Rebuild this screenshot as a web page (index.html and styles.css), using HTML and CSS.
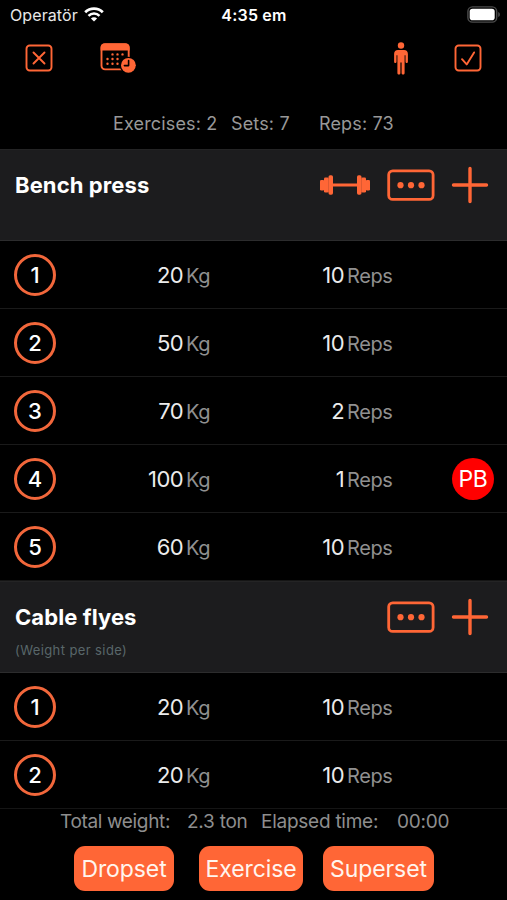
FILE: index.html
```html
<!DOCTYPE html>
<html lang="en">
<head>
    <meta charset="UTF-8">
    <meta name="viewport" content="width=device-width, initial-scale=1.0">
    <title>Workout</title>
    <link rel="stylesheet" href="styles.css">
</head>
<body>
    <div class="status-bar">
        <div class="carrier">
            <span>Operatör</span>
            <svg class="wifi" width="20" height="15" viewBox="0 0 20 15">
                <path d="M1.2 5.3a12.6 12.6 0 0 1 17.6 0" fill="none" stroke="#fff" stroke-width="2.8"/>
                <path d="M4.5 8.8a7.8 7.8 0 0 1 11 0" fill="none" stroke="#fff" stroke-width="2.5"/>
                <path d="M10 14.6l-3.1-3.1a4.4 4.4 0 0 1 6.2 0z" fill="#fff"/>
            </svg>
        </div>
        <span class="clock">4:35 em</span>
        <svg class="battery" width="34" height="17" viewBox="0 0 34 17">
            <rect x="0.9" y="0.9" width="28.8" height="15.2" rx="4.6" fill="none" stroke="#4b4b4b" stroke-width="1.4"/>
            <rect x="2.7" y="2.8" width="25" height="11.4" rx="2.8" fill="#fff"/>
            <path d="M31.2 6v5c1.3-.4 1.7-1.4 1.7-2.5s-.4-2.1-1.7-2.5z" fill="#4b4b4b"/>
        </svg>
    </div>

    <div class="toolbar">
        <button class="icon-btn close-btn" aria-label="Close">
            <svg width="28" height="28" viewBox="0 0 28 28">
                <rect x="1.5" y="1.5" width="25" height="25" rx="3.2"/>
                <path d="M8.5 8.5l11 11M19.5 8.5l-11 11"/>
            </svg>
        </button>
        <button class="icon-btn history-btn" aria-label="History">
            <svg width="36" height="31" viewBox="0 0 36 31">
                <rect x="1.5" y="1.2" width="27.2" height="25.2" rx="3.6"/>
                <path class="solid" d="M.6 7.5v-3a4 4 0 0 1 4-4h21a4 4 0 0 1 4 4v3z"/>
                <path class="dots" d="M12.5 11.4h.01M17.5 11.4h.01M22.5 11.4h.01M7.5 16h.01M12.5 16h.01M17.5 16h.01M7.5 20.8h.01M12.5 20.8h.01M17.5 20.8h.01"/>
                <circle class="gap" cx="28.4" cy="22.3" r="8.6"/>
                <circle class="solid" cx="28.4" cy="22.3" r="7.4"/>
                <path class="hands" d="M28.6 17.6v5h-4.2"/>
            </svg>
        </button>
        <button class="icon-btn body-btn" aria-label="Body">
            <svg width="14" height="33" viewBox="0 0 14 33">
                <circle class="solid" cx="7" cy="3.5" r="3.2"/>
                <path class="solid" d="M4 8h6c2.4 0 3.9 1.6 3.9 4v7.7c0 1.7-2.4 1.7-2.4 0v-6.500h-.9v17.700c0 2-3 2-3 0V20.500H6.400v10.400c0 2-3 2-3 0V13.200h-.9v6.500c0 1.700-2.400 1.700-2.400 0V12c0-2.400 1.500-4 3.900-4z"/>
            </svg>
        </button>
        <button class="icon-btn done-btn" aria-label="Done">
            <svg width="28" height="28" viewBox="0 0 28 28">
                <rect x="1.5" y="1.5" width="25" height="25" rx="3.2"/>
                <path d="M8 15.2l4.7 5.2 7.4-12"/>
            </svg>
        </button>
    </div>

    <div class="summary">
        <span class="exercises-count">Exercises: 2</span>
        <span class="sets-count">Sets: 7</span>
        <span class="reps-count">Reps: 73</span>
    </div>

    <div class="exercise">
        <div class="exercise-header">
            <div class="exercise-name">
                <h2>Bench press</h2>
            </div>
            <div class="actions">
                <svg class="barbell" width="50" height="20" viewBox="0 0 50 20">
                    <rect x="0" y="5" width="4.2" height="10.5" rx="1.3"/>
                    <rect x="4" y="2.6" width="4.7" height="15" rx="1.3"/>
                    <rect x="8.5" y="0.3" width="4.5" height="19.4" rx="1.6"/>
                    <rect x="12" y="8.5" width="26" height="3"/>
                    <rect x="37" y="0.3" width="4.5" height="19.4" rx="1.6"/>
                    <rect x="41.3" y="2.6" width="4.7" height="15" rx="1.3"/>
                    <rect x="45.8" y="5" width="4.2" height="10.5" rx="1.3"/>
                </svg>
                <svg class="more" width="48" height="32" viewBox="0 0 48 32">
                    <rect x="1.7" y="1.8" width="44.4" height="28.6" rx="4"/>
                    <circle cx="13.5" cy="16.2" r="3.1"/>
                    <circle cx="24" cy="16.2" r="3.1"/>
                    <circle cx="34.5" cy="16.2" r="3.1"/>
                </svg>
                <svg class="add" width="38" height="38" viewBox="0 0 38 38">
                    <path d="M19 2.5v33M2.5 19h33"/>
                </svg>
            </div>
        </div>
        <div class="set">
            <span class="set-number">1</span>
            <span class="value">20</span><span class="unit">Kg</span>
            <span class="value">10</span><span class="unit">Reps</span>
        </div>
        <div class="set">
            <span class="set-number">2</span>
            <span class="value">50</span><span class="unit">Kg</span>
            <span class="value">10</span><span class="unit">Reps</span>
        </div>
        <div class="set">
            <span class="set-number">3</span>
            <span class="value">70</span><span class="unit">Kg</span>
            <span class="value">2</span><span class="unit">Reps</span>
        </div>
        <div class="set">
            <span class="set-number">4</span>
            <span class="value">100</span><span class="unit">Kg</span>
            <span class="value">1</span><span class="unit">Reps</span>
            <span class="pb">PB</span>
        </div>
        <div class="set">
            <span class="set-number">5</span>
            <span class="value">60</span><span class="unit">Kg</span>
            <span class="value">10</span><span class="unit">Reps</span>
        </div>
    </div>

    <div class="exercise">
        <div class="exercise-header">
            <div class="exercise-name">
                <h2>Cable flyes</h2>
                <p>(Weight per side)</p>
            </div>
            <div class="actions">
                <svg class="more" width="48" height="32" viewBox="0 0 48 32">
                    <rect x="1.7" y="1.8" width="44.4" height="28.6" rx="4"/>
                    <circle cx="13.5" cy="16.2" r="3.1"/>
                    <circle cx="24" cy="16.2" r="3.1"/>
                    <circle cx="34.5" cy="16.2" r="3.1"/>
                </svg>
                <svg class="add" width="38" height="38" viewBox="0 0 38 38">
                    <path d="M19 2.5v33M2.5 19h33"/>
                </svg>
            </div>
        </div>
        <div class="set">
            <span class="set-number">1</span>
            <span class="value">20</span><span class="unit">Kg</span>
            <span class="value">10</span><span class="unit">Reps</span>
        </div>
        <div class="set">
            <span class="set-number">2</span>
            <span class="value">20</span><span class="unit">Kg</span>
            <span class="value">10</span><span class="unit">Reps</span>
        </div>
    </div>

    <div class="totals">
        <span class="weight-label">Total weight:</span>
        <span class="weight">2.3 ton</span>
        <span class="time-label">Elapsed time:</span>
        <span class="time">00:00</span>
    </div>

    <div class="buttons">
        <button class="dropset">Dropset</button>
        <button class="add-exercise">Exercise</button>
        <button class="superset">Superset</button>
    </div>
</body>
</html>
```
FILE: styles.css
```css
* {
    box-sizing: border-box;
}

body {
    margin: 0;
    width: 507px;
    height: 900px;
    overflow: hidden;
    background-color: #000;
    color: #fff;
    font-family: Inter, "Liberation Sans", sans-serif;
    white-space: nowrap;
}

button {
    border: none;
    padding: 0;
    font-family: inherit;
    cursor: pointer;
}

svg {
    display: block;
}

/* Status bar */
.status-bar {
    display: grid;
    grid-template-columns: 1fr auto 1fr;
    align-items: center;
    height: 30px;
    padding: 0 6px 1px 10px;
    font-size: 16px;
}

.carrier {
    display: flex;
    align-items: center;
    gap: 6px;
    letter-spacing: 0.1px;
    color: #e8e8e8;
}

.clock {
    padding-right: 3px;
    font-weight: 600;
    letter-spacing: 0.2px;
}

.battery {
    justify-self: end;
}

/* Toolbar */
.toolbar {
    display: flex;
    height: 67px;
    padding: 12px 25px 0 25px;
}

.icon-btn {
    display: block;
    height: 32px;
    background: none;
}

.icon-btn svg {
    fill: none;
    stroke: #ff6636;
    stroke-width: 1.9;
    stroke-linecap: round;
    stroke-linejoin: round;
}

.icon-btn .solid {
    fill: #ff6636;
    stroke: none;
}

.icon-btn .dots {
    stroke-width: 2.4;
}

.icon-btn .gap {
    fill: #000;
    stroke: none;
}

.icon-btn .hands {
    stroke: #000;
    stroke-width: 1.6;
}

.history-btn {
    margin-left: 47px;
}

.body-btn {
    margin-left: auto;
}

.done-btn {
    margin-left: 46px;
}

/* Summary */
.summary {
    display: flex;
    height: 52px;
    padding-left: 113px;
    line-height: 54px;
    font-size: 18px;
    letter-spacing: 0.15px;
    color: #989898;
}

.exercises-count {
    width: 118px;
}

.sets-count {
    width: 88px;
}

/* Exercises */
.exercise-header {
    display: flex;
    justify-content: space-between;
    height: 92px;
    padding: 17px 18px 0 15px;
    background-color: #1c1c1e;
    border-top: 1px solid #242425;
    border-bottom: 1px solid #2c2c2d;
}

.exercise-name h2 {
    margin: 0;
    line-height: 36px;
    font-size: 22px;
    font-weight: 700;
    letter-spacing: 0.1px;
}

.exercise-name p {
    margin: 5px 0 0;
    line-height: 20px;
    font-size: 13px;
    letter-spacing: 0.4px;
    color: #59676a;
}

.actions {
    display: flex;
    align-items: center;
    height: 36px;
}

.barbell {
    margin-right: 17px;
    fill: #ff6636;
}

.more {
    margin-right: 16px;
    fill: #ff6636;
}

.more rect {
    fill: none;
    stroke: #ff6636;
    stroke-width: 2.8;
}

.add {
    stroke: #ff6636;
    stroke-width: 3.4;
    stroke-linecap: round;
}

.set {
    display: grid;
    grid-template-columns: 42px 127px 70px 91px 108px 42px;
    align-items: center;
    height: 68px;
    padding-left: 14px;
    border-bottom: 1px solid #1a1a1a;
}

.set:last-child {
    border-bottom-color: #151515;
}

.set-number {
    height: 42px;
    border: 3px solid #f2673b;
    border-radius: 50%;
    line-height: 36px;
    text-align: center;
    font-size: 22px;
    font-weight: 500;
}

.value {
    text-align: right;
    font-size: 22px;
    letter-spacing: -0.6px;
    color: #ececec;
}

.unit {
    padding: 2px 0 0 3px;
    font-size: 20px;
    letter-spacing: -0.4px;
    color: #909090;
}

.pb {
    height: 42px;
    border-radius: 50%;
    background-color: #ff0000;
    line-height: 42px;
    text-align: center;
    font-size: 23px;
    letter-spacing: -0.3px;
}

/* Footer */
.totals {
    display: flex;
    height: 37px;
    padding-left: 60px;
    line-height: 26px;
    font-size: 19px;
    letter-spacing: -0.25px;
    color: #8e8e8e;
}

.weight-label {
    width: 127px;
    letter-spacing: -0.35px;
}

.weight {
    width: 74px;
}

.time-label {
    width: 136px;
}

.buttons {
    display: flex;
    padding-left: 74px;
}

.buttons button {
    height: 45px;
    border-radius: 11px;
    background-color: #ff6636;
    color: #fff5ee;
    font-size: 23px;
    letter-spacing: -0.1px;
}

.dropset {
    width: 100px;
}

.add-exercise {
    width: 104px;
    margin: 0 20px 0 25px;
}

.superset {
    width: 111px;
}
```
